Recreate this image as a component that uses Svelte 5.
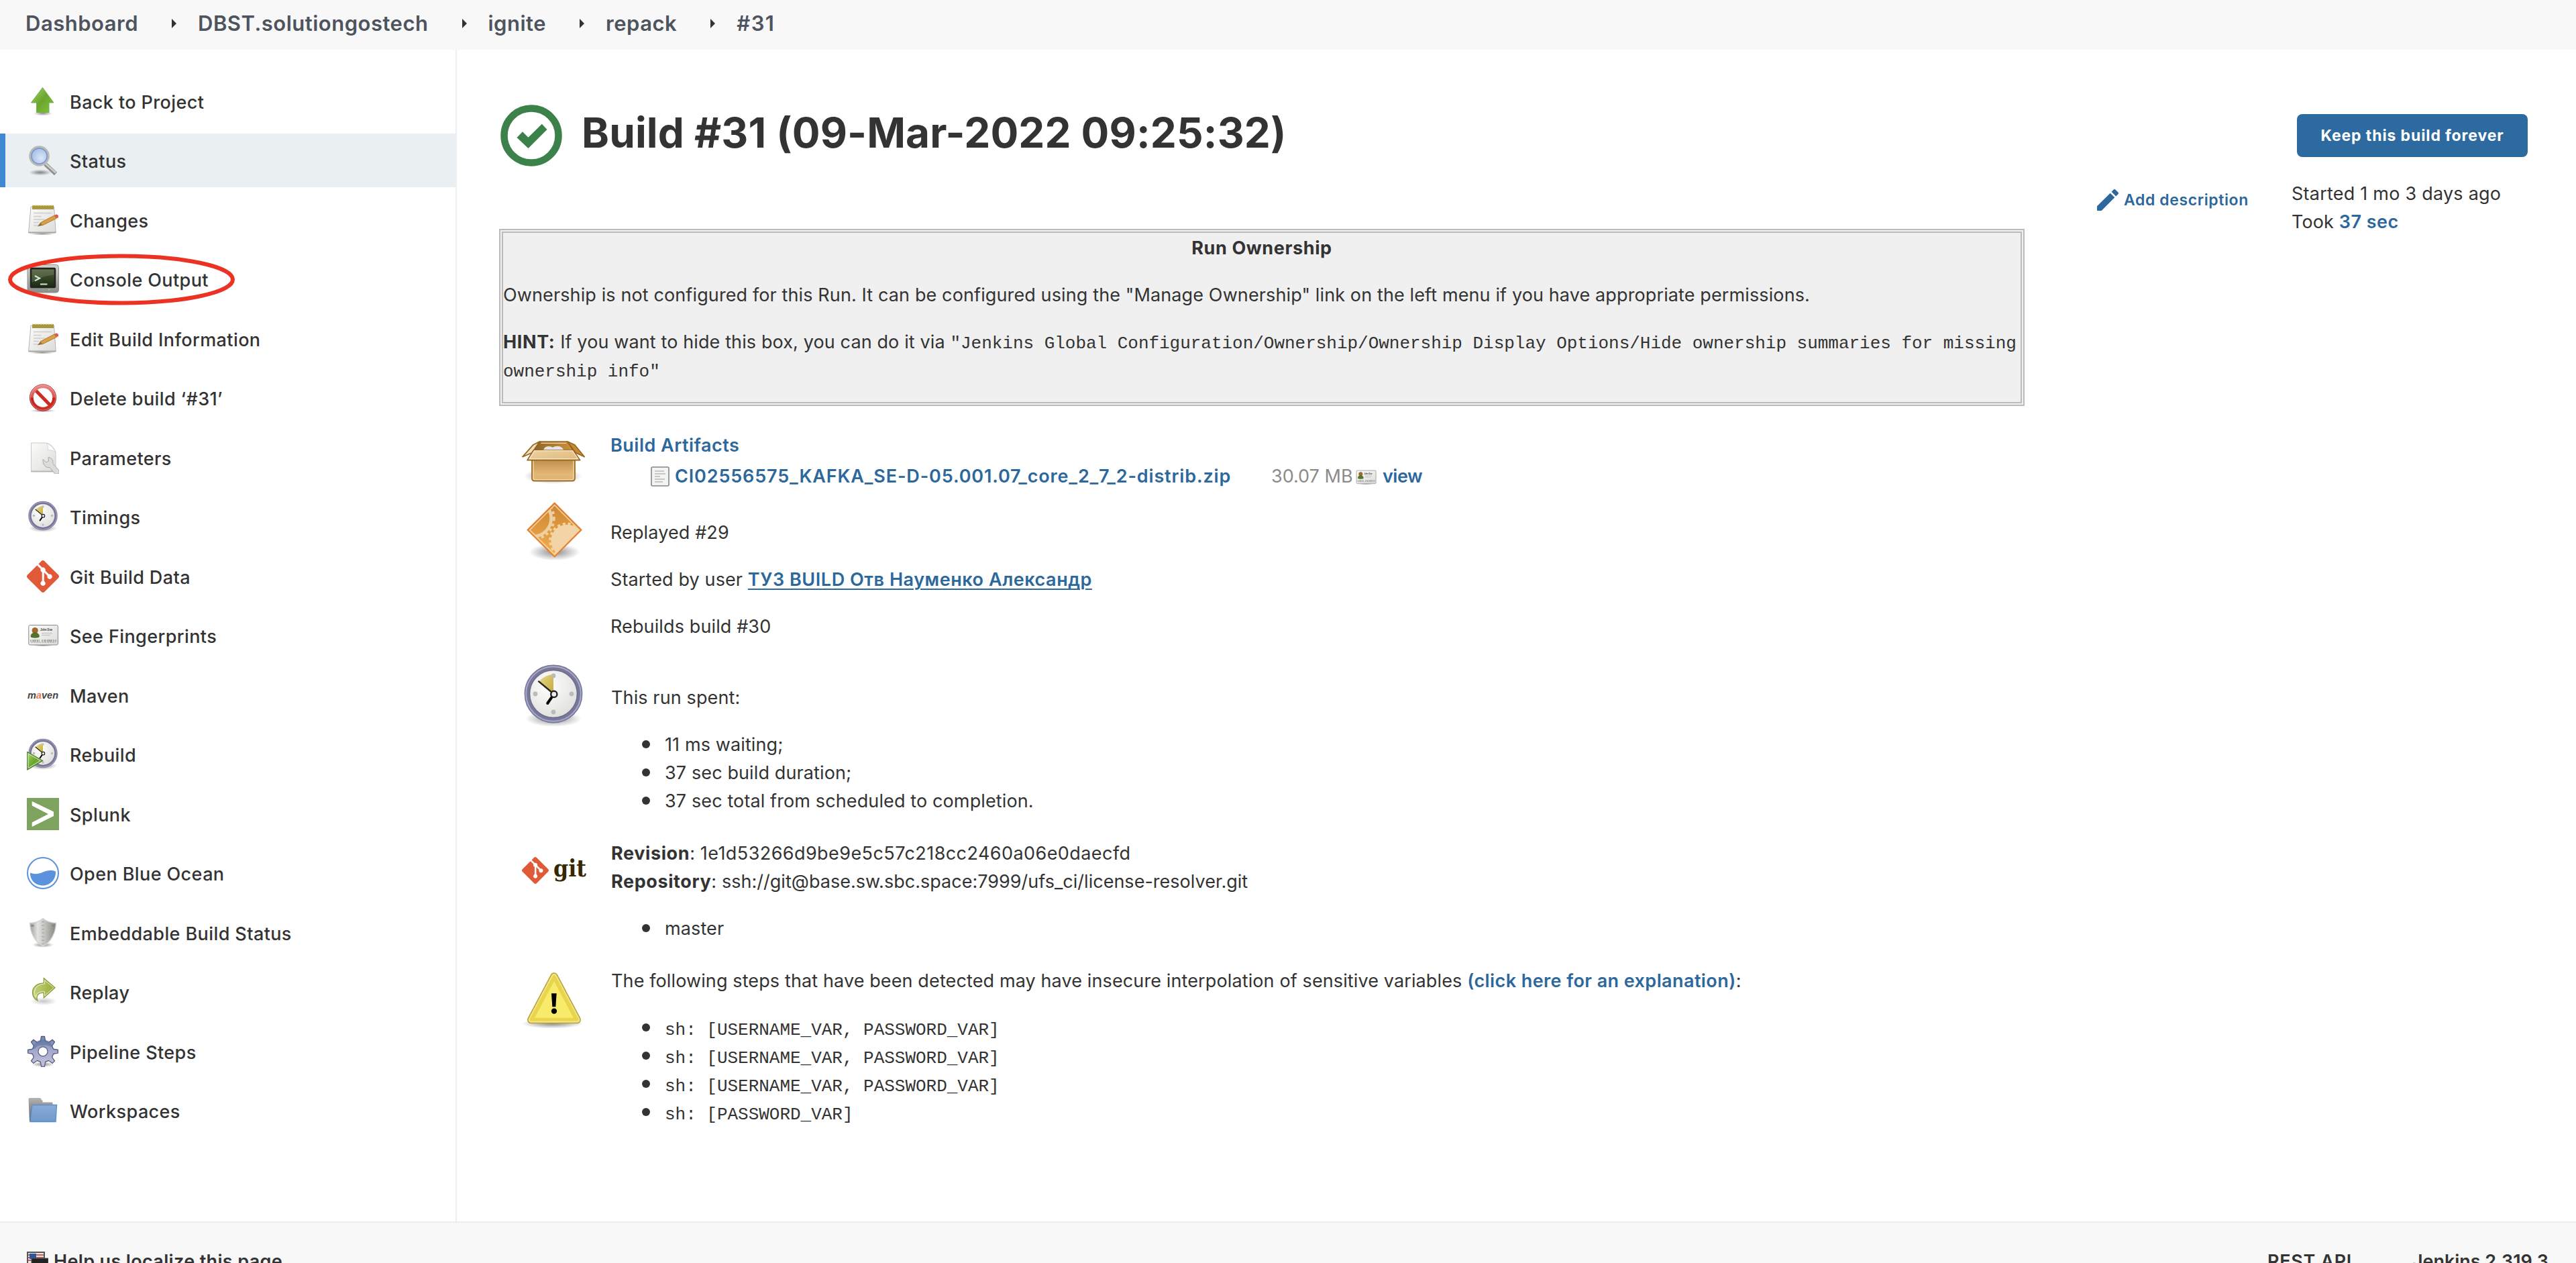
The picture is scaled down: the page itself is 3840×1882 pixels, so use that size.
<script>
  const crumbs = ['Dashboard', 'DBST.solutiongostech', 'ignite', 'repack', '#31'];

  const tasks = [
    { icon: 'up', label: 'Back to Project' },
    { icon: 'search', label: 'Status', active: true },
    { icon: 'notepad', label: 'Changes' },
    { icon: 'terminal', label: 'Console Output', marked: true },
    { icon: 'notepad', label: 'Edit Build Information' },
    { icon: 'forbidden', label: 'Delete build ‘#31’' },
    { icon: 'document', label: 'Parameters' },
    { icon: 'clock', label: 'Timings' },
    { icon: 'git', label: 'Git Build Data' },
    { icon: 'card', label: 'See Fingerprints' },
    { icon: 'maven', label: 'Maven' },
    { icon: 'rebuild', label: 'Rebuild' },
    { icon: 'splunk', label: 'Splunk' },
    { icon: 'ocean', label: 'Open Blue Ocean' },
    { icon: 'shield', label: 'Embeddable Build Status' },
    { icon: 'replay', label: 'Replay' },
    { icon: 'gear', label: 'Pipeline Steps' },
    { icon: 'folder', label: 'Workspaces' }
  ];

  const timings = ['11 ms waiting;', '37 sec build duration;', '37 sec total from scheduled to completion.'];
  const steps = [
    'sh: [USERNAME_VAR, PASSWORD_VAR]',
    'sh: [USERNAME_VAR, PASSWORD_VAR]',
    'sh: [USERNAME_VAR, PASSWORD_VAR]',
    'sh: [PASSWORD_VAR]'
  ];

  const gitMark =
    'M23.546 10.93L13.067.452c-.604-.603-1.582-.603-2.188 0L8.708 2.627l2.76 2.76c.645-.215 1.379-.07 1.889.441.516.515.658 1.258.438 1.9l2.658 2.66c.645-.223 1.387-.078 1.9.435.721.72.721 1.884 0 2.604-.719.719-1.881.719-2.6 0-.539-.541-.674-1.337-.404-1.996L12.86 8.955v6.525c.176.086.342.203.488.348.713.721.713 1.883 0 2.6-.719.721-1.889.721-2.609 0-.719-.719-.719-1.879 0-2.598.182-.18.387-.316.605-.406V8.835c-.217-.091-.424-.222-.6-.401-.545-.545-.676-1.342-.396-2.009L7.636 3.7.45 10.881c-.6.605-.6 1.584 0 2.189l10.48 10.477c.604.604 1.582.604 2.186 0l10.43-10.43c.605-.603.605-1.582 0-2.187';

  const bars = [5, 8, 10, 12, 14.5, 17, 22, 25, 27, 30, 32, 34, 36, 39, 42];

  // Cog outline: eight blunt teeth around a ring.
  function cog(cx, cy, teeth, inner, outer) {
    const pts = [];
    const step = (Math.PI * 2) / teeth;
    for (let i = 0; i < teeth; i++) {
      const a = i * step - Math.PI / 2;
      for (const [d, r] of [[-0.29, inner], [-0.14, outer], [0.14, outer], [0.29, inner]]) {
        pts.push(`${(cx + Math.cos(a + d * step) * r).toFixed(2)},${(cy + Math.sin(a + d * step) * r).toFixed(2)}`);
      }
    }
    return pts.join(' ');
  }
</script>

{#snippet clockFace()}
  <ellipse cx="24" cy="41" rx="21" ry="6" fill="url(#shadow)" />
  <circle cx="24" cy="22.5" r="19.6" fill="url(#face)" stroke="#77779b" stroke-width="4.2" />
  <circle cx="24" cy="22.5" r="20.4" fill="none" stroke="#a9a9c6" stroke-width="1" />
  <circle cx="24" cy="22.5" r="17.6" fill="none" stroke="#55556f" stroke-opacity=".5" stroke-width=".7" />
  <path d="M24 22.5V8c-4 0-8 2-11 5.500z" fill="url(#wedge)" />
  <g fill="#b9bdb6">
    <circle cx="24" cy="9" r="1.700" /><circle cx="37.500" cy="22.500" r="1.700" />
    <circle cx="24" cy="36" r="1.700" /><circle cx="10.500" cy="22.500" r="1.700" />
  </g>
  <path d="M23 21.500L13 13.200" stroke="#222" stroke-width="1.200" stroke-linecap="round" />
  <path d="M23.200 24.300L19.600 29.500" stroke="#000" stroke-width="2" stroke-linecap="round" />
  <circle cx="24.400" cy="22.700" r="2.300" fill="#eee" stroke="#222" stroke-width="1.200" />
{/snippet}

{#snippet idCard()}
  <ellipse cx="24" cy="38.500" rx="16" ry="2" fill="url(#shadow)" />
  <rect x="2.800" y="8.500" width="43.600" height="29.500" rx="2" fill="url(#paper)" stroke="#888" stroke-width="1" />
  <circle cx="12.200" cy="16.500" r="4.600" fill="#a06a2c" />
  <path d="M6 26c0-4 2-6 6.200-6s6.200 2 6.200 6c-2 1.600-10.400 1.600-12.400 0z" fill="#55762a" stroke="#36501a" stroke-width=".6" />
  <text x="20" y="17" class="card-name" textLength="18" lengthAdjust="spacingAndGlyphs">John Doe</text>
  <path d="M22 20.500h16M22 23.500h13" stroke="#c8c8c8" stroke-width="1.600" />
  {#each bars as x}
    <path d="M{x + 1} 30v3.500" stroke="#777" stroke-width="1" />
  {/each}
  <path d="M6 34.200h37" stroke="#999" stroke-width=".8" stroke-dasharray="3 1" />
{/snippet}

{#snippet icon(name)}
  <svg class="icon" viewBox="0 0 48 48" aria-hidden="true">
    {#if name === 'up'}
      <ellipse cx="24" cy="42" rx="14" ry="3.500" fill="url(#shadow)" />
      <path d="M23.500 3.500L40 26h-7v14.500H14.500V26H6.500z" fill="url(#green)" stroke="#76b04a" stroke-width="1" />
    {:else if name === 'search'}
      <ellipse cx="20" cy="42" rx="17" ry="4.500" fill="url(#shadow)" />
      <path d="M27.500 29.500L43 44" stroke="#8d8d8d" stroke-width="6" />
      <path d="M27.500 28.500L43 42.500" stroke="#cfcfcf" stroke-width="2.500" />
      <circle cx="18.500" cy="17.500" r="13.600" fill="url(#lens)" stroke="#b9b9b9" stroke-width="3.400" />
      <circle cx="18.500" cy="17.500" r="11.500" fill="none" stroke="#6f92c9" stroke-width="1.400" />
    {:else if name === 'notepad'}
      <ellipse cx="23" cy="44.500" rx="19" ry="2" fill="url(#shadow)" />
      <path d="M6 4h34.500l2.700 38.500H2.600z" fill="url(#paper)" stroke="#b5b5b0" stroke-width="1" />
      <path d="M2.600 42.500h40.600" stroke="#a5a5a0" stroke-width="2" />
      <rect x="8" y="2" width="32" height="6" fill="#a8983f" />
      <path d="M8 2h32" stroke="#e9dfa0" stroke-width="1.600" stroke-dasharray="2 2" />
      <path d="M10 13.500h27M10 18.500h12M10 23h17M10 27.500h8M10 32h10" stroke="#cdcdcd" stroke-width="1.400" />
      <path d="M20 28L41 17l3 4.500L23 32z" fill="#dba044" stroke="#9a6a22" stroke-width=".8" />
      <path d="M20 28l-4 5.500L23 32z" fill="#8d713c" />
      <path d="M41 17l2.600-1.400c2.400-.6 4.600 2.600 3 4.600L44 21.500z" fill="#dd5a4e" />
    {:else if name === 'terminal'}
      <rect x="1" y="2.500" width="46.500" height="41.500" rx="4" fill="url(#bezel)" stroke="#8f918c" stroke-width="1" />
      <rect x="6" y="8" width="36" height="28" rx="1" fill="url(#screen)" stroke="#20241d" stroke-width="2.400" />
      <path d="M7.500 9.500h33v8c-12 1-22 4-33 12z" fill="#fff" fill-opacity=".13" />
      <path d="M12 19l7 3.700-7 3.700" fill="none" stroke="#d4ead0" stroke-width="2.200" />
      <path d="M20 31.500h10.500" stroke="#c5dcc0" stroke-width="2.200" />
      <circle cx="33" cy="39.800" r="1" fill="#9be04f" />
    {:else if name === 'forbidden'}
      <ellipse cx="24" cy="43" rx="19" ry="2.500" fill="url(#shadow)" />
      <path d="M11.500 11l24.500 25" stroke="#cc2a24" stroke-width="5" />
      <circle cx="24" cy="23.500" r="17" fill="none" stroke="url(#red)" stroke-width="5.600" />
      <circle cx="24" cy="23.500" r="18.600" fill="none" stroke="#fff" stroke-opacity=".35" stroke-width="1" />
      <circle cx="24" cy="23.500" r="19.700" fill="none" stroke="#a8201c" stroke-width=".7" />
    {:else if name === 'document'}
      <path d="M6.500 2h22c7 1 12 7 14.500 14v28.500H6.500z" fill="url(#paper)" stroke="#c9cac6" stroke-width="1" />
      <path d="M6.500 44.500H43" stroke="#b5b6b2" stroke-width="1.800" />
      <path d="M29 2.500c2.500 3 3.500 7 2.500 10.500 4-1 8 .3 10.500 2.500-2-6-7-11-13-13z" fill="#fff" stroke="#d2d2d0" stroke-width=".8" />
      <path d="M24 26.500l5 4.500 3.500-2-.5-5.500c5 .3 8 4.500 6.500 9L48 43v5H42l-8-9.500c-6 1-10.500-4-10-12z" fill="#dcddda" stroke="#a9aaa7" stroke-width="1" />
    {:else if name === 'clock'}
      {@render clockFace()}
    {:else if name === 'git'}
      <path transform="scale(2)" d={gitMark} fill="#e05a38" />
    {:else if name === 'card'}
      {@render idCard()}
    {:else if name === 'maven'}
      <text x="1" y="29" class="maven" textLength="46" lengthAdjust="spacingAndGlyphs">m<tspan fill="#ee7a52">a</tspan>ven</text>
    {:else if name === 'rebuild'}
      {@render clockFace()}
      <path d="M.8 20.500L23.500 33.500.8 47z" fill="url(#green)" stroke="#4c7a32" stroke-width="1.200" />
      <path d="M2.200 23L20.500 33.500 2.200 44.500z" fill="none" stroke="#dff3cd" stroke-width=".9" />
    {:else if name === 'splunk'}
      <path d="M0 0h48v48H0z" fill="#7ea35e" />
      <path d="M7.700 5L40 20.500V27L7.700 43V36.500L32 23.900 7.700 11.500z" fill="#fff" />
    {:else if name === 'ocean'}
      <circle cx="24" cy="24" r="23" fill="#fff" stroke="#5a92de" stroke-width="2" />
      <path d="M5 23.500c6 2.500 12 2 18-.5 7-3 13-4 20-1.500.8 11-7.500 21-19 21S4.500 34 5 23.500z" fill="#5a92de" />
    {:else if name === 'shield'}
      <ellipse cx="24" cy="42" rx="16" ry="4" fill="url(#shadow)" />
      <path d="M24 2.500c5 4.500 12 6.500 19.500 7C43 24 36 38 24 43.500 12 38 5 24 4.500 9.500 12 9 19 7 24 2.500z" fill="url(#steel)" stroke="#d4d5d1" stroke-width="1.400" />
      <path d="M24 7v34" stroke="#a3a49f" stroke-width="3.400" stroke-dasharray="1.300 4.200" />
      <path d="M6.500 13.500h4M37.500 13.500h4" stroke="#858680" stroke-width="2.500" />
    {:else if name === 'replay'}
      <ellipse cx="25" cy="38" rx="20" ry="6" fill="url(#shadow)" opacity=".5" />
      <path d="M25.300 3.500L42 17.700 25.300 33V25.500c-7-1-12 3-9.500 11.500C9 33 7 26 9.500 19.500 12 14 18 11 25.300 10.800z" fill="url(#lime)" stroke="#89983c" stroke-width="1.200" />
      <path d="M26.600 6.500L40 17.700 26.600 30v-6c-8-1-13 2-12.800 8C9 25 11 13 26.600 12z" fill="none" stroke="#f4f8dc" stroke-width=".9" />
    {:else if name === 'gear'}
      <ellipse cx="24" cy="43" rx="17" ry="4" fill="url(#shadow)" />
      <polygon points={cog(24, 23.800, 8, 16, 22.500)} fill="url(#cog)" stroke="#4b5479" stroke-width="1.200" stroke-linejoin="round" />
      <path d="M9 20c5 1 5-6 10-5 6 0 12-2 19 3 0-8-7-12-14-12S9 11 9 20z" fill="#5b6e9c" fill-opacity=".55" />
      <circle cx="24" cy="23.800" r="7" fill="#fff" stroke="#59618a" stroke-width="1.200" />
    {:else if name === 'folder'}
      <path d="M2.500 7c0-1.500 1-2 2-2h14.500c2 0 2.500 1 3 3.500h1.500v3H37c1 0 1.500.5 1.500 1.500v27H4z" fill="url(#tab)" />
      <path d="M8 15.500h36.500L43 40.500H5z" fill="url(#blue)" stroke="#5f8fc8" stroke-width="1.400" />
    {/if}
  </svg>
{/snippet}

<svg class="defs" aria-hidden="true">
  <defs>
    <radialGradient id="shadow"><stop offset="0" stop-color="#000" stop-opacity=".45" /><stop offset="1" stop-color="#000" stop-opacity="0" /></radialGradient>
    <linearGradient id="green" x1="0" y1="0" x2="1" y2="1"><stop offset="0" stop-color="#a8d66c" /><stop offset=".5" stop-color="#6aa52e" /><stop offset="1" stop-color="#80c83c" /></linearGradient>
    <radialGradient id="lens" cx=".6" cy=".6"><stop offset="0" stop-color="#dce8f7" /><stop offset="1" stop-color="#a9c2e8" /></radialGradient>
    <linearGradient id="paper" x1="0" y1="0" x2="1" y2="1"><stop offset="0" stop-color="#fbfbfa" /><stop offset="1" stop-color="#dcdddb" /></linearGradient>
    <linearGradient id="bezel" x1="0" y1="0" x2="0" y2="1"><stop offset="0" stop-color="#d4d5d1" /><stop offset="1" stop-color="#8b8d88" /></linearGradient>
    <linearGradient id="screen" x1="0" y1="0" x2="0" y2="1"><stop offset="0" stop-color="#4d6034" /><stop offset="1" stop-color="#1c2914" /></linearGradient>
    <linearGradient id="red" x1="0" y1="0" x2="0" y2="1"><stop offset="0" stop-color="#e58682" /><stop offset=".48" stop-color="#d9534e" /><stop offset=".52" stop-color="#c4211b" /><stop offset="1" stop-color="#cf2e28" /></linearGradient>
    <radialGradient id="face" cx=".4" cy=".35" r=".7"><stop offset="0" stop-color="#fff" /><stop offset="1" stop-color="#dcdcd9" /></radialGradient>
    <linearGradient id="wedge" x1="0" y1="0" x2="1" y2="1"><stop offset="0" stop-color="#e8d98a" /><stop offset="1" stop-color="#c2a93a" /></linearGradient>
    <linearGradient id="steel"><stop offset="0" stop-color="#9c9d98" /><stop offset=".3" stop-color="#e3e4e0" /><stop offset=".6" stop-color="#bfc0bb" /><stop offset="1" stop-color="#84857f" /></linearGradient>
    <linearGradient id="lime"><stop offset="0" stop-color="#c3d37e" /><stop offset="1" stop-color="#96ae34" /></linearGradient>
    <linearGradient id="cog" x1="0" y1="0" x2="0" y2="1"><stop offset="0" stop-color="#7385b0" /><stop offset=".5" stop-color="#a5aace" /><stop offset="1" stop-color="#cbc0dd" /></linearGradient>
    <linearGradient id="tab" x1="0" y1="0" x2="0" y2="1"><stop offset="0" stop-color="#b3b3b1" /><stop offset="1" stop-color="#5c5d5b" /></linearGradient>
    <linearGradient id="blue" x1="0" y1="0" x2="0" y2="1"><stop offset="0" stop-color="#88acd8" /><stop offset="1" stop-color="#7099cb" /></linearGradient>
    <linearGradient id="carton" x1="0" y1="0" x2="0" y2="1"><stop offset="0" stop-color="#b98a44" /><stop offset=".7" stop-color="#e3b878" /><stop offset="1" stop-color="#deb06c" /></linearGradient>
    <linearGradient id="flap" x1="0" y1="0" x2="1" y2="1"><stop offset="0" stop-color="#ecd2a4" /><stop offset="1" stop-color="#e0b878" /></linearGradient>
    <linearGradient id="inside"><stop offset="0" stop-color="#8f6428" /><stop offset="1" stop-color="#cf923c" /></linearGradient>
    <linearGradient id="amber" x1="0" y1="0" x2="0" y2="1"><stop offset="0" stop-color="#cd8432" /><stop offset="1" stop-color="#f2b04e" /></linearGradient>
    <clipPath id="diamond"><path d="M200 340L308 449 200 557 91 449z" /></clipPath>
  </defs>
</svg>

<div class="page">
  <nav class="topbar">
    {#each crumbs as crumb, i}
      {#if i > 0}
        <svg class="arrow" viewBox="0 0 7 14" aria-hidden="true"><path d="M0 0l7 7-7 7z" fill="#333" /></svg>
      {/if}
      <span class="crumb" class:last={i === crumbs.length - 1}>{crumb}</span>
    {/each}
  </nav>

  <div class="columns">
    <aside class="sidebar">
      {#each tasks as task}
        <div class="task" class:active={task.active}>
          {@render icon(task.icon)}
          <span class="task-label">{task.label}</span>
          {#if task.marked}
            <svg class="marker" viewBox="0 0 340 78" aria-hidden="true">
              <ellipse cx="170" cy="38.500" rx="166" ry="35" fill="none" stroke="#ec3323" stroke-width="6" />
            </svg>
          {/if}
        </div>
      {/each}
    </aside>

    <main class="content">
      <section class="build">
        <header class="title">
          <svg class="status" viewBox="0 0 92 92" aria-hidden="true">
            <circle cx="46" cy="46" r="40.500" fill="none" stroke="#3c804a" stroke-width="10.500" />
            <path d="M24.500 49l8.500-8.800 8.500 8.500 20.300-20 7.700 8.300-28 28z" fill="#3c804a" />
          </svg>
          <h1>Build #31 (09-Mar-2022 09:25:32)</h1>
        </header>

        <div class="ownership">
          <p class="center"><b>Run Ownership</b></p>
          <p>Ownership is not configured for this Run. It can be configured using the "Manage Ownership" link on the left menu if you have appropriate permissions.</p>
          <p><b>HINT:</b> If you want to hide this box, you can do it via <code>"Jenkins Global Configuration/Ownership/Ownership Display Options/Hide ownership summaries for missing ownership info"</code></p>
        </div>

        <div class="entry artifacts">
          <svg class="art" viewBox="45 6 300 258" aria-hidden="true">
            <ellipse cx="193" cy="208" rx="130" ry="36" fill="url(#shadow)" />
            <rect x="99" y="128" width="192" height="102" rx="10" fill="url(#carton)" stroke="#97661f" stroke-width="5" />
            <path d="M105 140v76q0 8 8 8h164q8 0 8-8v-76" fill="none" stroke="#f2d8a8" stroke-width="4" />
            <path d="M133 54h125l26 42H106z" fill="url(#inside)" stroke="#97661f" stroke-width="5" />
            <path d="M150 93q4-18 24-18 12 0 17 5 8-6 22-6 22 1 28 19z" fill="#e4e4e2" />
            <path d="M133 54l-28 14-48 54 42-18z" fill="#f0dfc0" stroke="#97661f" stroke-width="5" stroke-linejoin="round" />
            <path d="M258 54l32 14 44 54-40-18z" fill="#c48a38" stroke="#97661f" stroke-width="5" stroke-linejoin="round" />
            <path d="M106 93h177l31 44H78z" fill="url(#flap)" stroke="#97661f" stroke-width="5" stroke-linejoin="round" />
            <path d="M110 95h170l24 36H88z" fill="none" stroke="#f7e6c6" stroke-width="4" />
            <path d="M139 61h113" stroke="#f2d8a8" stroke-width="4" />
          </svg>
          <div class="body">
            <div class="link">Build Artifacts</div>
            <div class="file">
              <svg class="file-icon" viewBox="0 0 28 30" aria-hidden="true">
                <rect x="1" y="1" width="26" height="28" rx="1.500" fill="#f4f4f3" stroke="#858585" stroke-width="1.600" />
                <path d="M6 7h14M6 11h16M6 15h8M6 19h15M6 23h12" stroke="#b9b9b9" stroke-width="1.600" />
              </svg>
              <span class="link zip">CI02556575_KAFKA_SE-D-05.001.07_core_2_7_2-distrib.zip</span>
              <span class="size">30.07 MB</span>
              <svg class="card-icon" viewBox="2 7 45 33" aria-hidden="true">{@render idCard()}</svg>
              <span class="link view">view</span>
            </div>
          </div>
        </div>

        <div class="entry cause">
          <svg class="art" viewBox="45 312 300 290" aria-hidden="true">
            <ellipse cx="200" cy="548" rx="114" ry="38" fill="url(#shadow)" />
            <path d="M200 328L320 449 200 569 79 449z" fill="url(#amber)" stroke="#e57c2e" stroke-width="5" stroke-linejoin="round" />
            <g clip-path="url(#diamond)">
              <circle cx="104" cy="397" r="81" fill="none" stroke="#eecfa2" stroke-width="14" />
              <circle cx="104" cy="397" r="93" fill="none" stroke="#eecfa2" stroke-width="12" stroke-dasharray="12 12" />
              <circle cx="256" cy="497" r="72" fill="#f3d4a6" />
              <circle cx="256" cy="497" r="76" fill="none" stroke="#f3d4a6" stroke-width="11" stroke-dasharray="12 12" />
            </g>
            <path d="M200 338L310 449 200 559 89 449z" fill="none" stroke="#f6ddb4" stroke-opacity=".8" stroke-width="5" />
          </svg>
          <div class="body">
            <p>Replayed #29</p>
            <p>Started by user <span class="link user">ТУЗ BUILD Отв Науменко Александр</span></p>
            <p>Rebuilds build #30</p>
          </div>
        </div>

        <div class="entry spent">
          <svg class="art" viewBox="0 0 48 48" aria-hidden="true">{@render clockFace()}</svg>
          <div class="body">
            <p>This run spent:</p>
            <ul>{#each timings as t}<li>{t}</li>{/each}</ul>
          </div>
        </div>

        <div class="entry revision">
          <svg class="art" viewBox="0 0 97 42" aria-hidden="true">
            <path transform="translate(0 1) scale(1.667)" d={gitMark} fill="#e05a38" />
            <text x="47" y="30" class="git-word" textLength="49" lengthAdjust="spacingAndGlyphs">git</text>
          </svg>
          <div class="body">
            <div><b>Revision</b>: <span class="hash">1e1d53266d9be9e5c57c218cc2460a06e0daecfd</span></div>
            <div><b>Repository</b>: <span class="repo">ssh://git@base.sw.sbc.space:7999/ufs_ci/license-resolver.git</span></div>
            <ul><li>master</li></ul>
          </div>
        </div>

        <div class="entry warning">
          <svg class="art" viewBox="36 545 288 258" aria-hidden="true">
            <ellipse cx="175" cy="780" rx="138" ry="22" fill="url(#shadow)" />
            <path d="M183 569L286 763H80z" fill="#e9d54c" stroke="#b8a034" stroke-width="34" stroke-linejoin="round" />
            <path d="M183 569L286 763H80z" fill="#e9d54c" stroke="#f2e58a" stroke-width="25" stroke-linejoin="round" />
            <path d="M183 571L284 761H82z" fill="#e9d54c" stroke="#e9d54c" stroke-width="15" stroke-linejoin="round" />
            <path d="M183 591L270 754H96z" fill="#f8ea6a" />
            <path d="M171 645h23l-4 60h-15z" />
            <circle cx="183" cy="724" r="12.500" />
          </svg>
          <div class="body">
            <div>The following steps that have been detected may have insecure interpolation of sensitive variables <span class="link explain">(click here for an explanation)</span>:</div>
            <ul>{#each steps as s}<li><code>{s}</code></li>{/each}</ul>
          </div>
        </div>
      </section>

      <div class="describe">
        <svg class="pencil" viewBox="3 3 18 18" aria-hidden="true">
          <path d="M3 17.250V20.400a.6.6 0 0 0 .6.6h3.150L17.810 9.940l-3.750-3.750zM20.710 7.040a1 1 0 0 0 0-1.410l-2.340-2.340a1 1 0 0 0-1.410 0l-1.830 1.830 3.750 3.750z" fill="#2c689c" />
        </svg>
        <span>Add description</span>
      </div>

      <div class="meta">
        <button>Keep this build forever</button>
        <div class="started">Started 1 mo 3 days ago</div>
        <div>Took <span class="link">37 sec</span></div>
      </div>
    </main>
  </div>

  <footer class="footer">
    <svg class="flag" viewBox="0 0 32 32" aria-hidden="true">
      <rect x="1" y="1" width="25" height="20" fill="#e8e6e4" stroke="#555753" stroke-width="2" />
      <path d="M2 5h23M2 9h23M2 13h23" stroke="#c9605c" stroke-width="1.800" />
      <rect x="4" y="3" width="10" height="8" fill="#2f55a0" />
      <rect x="7" y="10" width="25" height="20" fill="#222" stroke="#555" stroke-width="1" />
    </svg>
    <span class="localize">Help us localize this page</span>
    <span class="rest">REST API</span>
    <span class="version">Jenkins 2.319.3</span>
  </footer>
</div>

<style>
  :global(body) { background: #fff; }
  .page {
    display: flex;
    flex-direction: column;
    width: 3840px;
    height: 1882px;
    overflow: hidden;
    font: 400 27px/42px Inter, 'Noto Sans', sans-serif;
    letter-spacing: 0.118px;
    color: #333;
  }
  .defs { position: absolute; width: 0; height: 0; }
  p, ul, h1 { margin: 0; padding: 0; }

  .topbar {
    display: flex;
    align-items: center;
    flex: none;
    height: 74px;
    padding: 0 38px;
    box-sizing: border-box;
    background: #f8f8f8;
    color: #4d545d;
    font-size: 31px;
    font-weight: 600;
    letter-spacing: 0.500px;
    white-space: nowrap;
  }
  .crumb { line-height: 42px; margin-bottom: 4px; }
  .crumb.last { letter-spacing: 1.500px; }
  .arrow { width: 7px; height: 14px; margin: 0 32px 5px 50px; }

  .columns { display: flex; flex: none; height: 1746px; }
  .sidebar {
    width: 679px;
    flex: none;
    padding-top: 36.500px;
    border-right: 2px solid #eaeff2;
    height: 1709.500px;
    font-weight: 500;
    letter-spacing: 0.400px;
  }
  .task {
    position: relative;
    display: flex;
    align-items: center;
    height: 80px;
    margin-bottom: 8.500px;
    padding-left: 32px;
    border-left: 8px solid transparent;
  }
  .task.active { background: #eaeff2; border-left-color: #3f87d2; }
  .task-label { padding-top: 4px; }
  .icon { width: 48px; height: 48px; margin-right: 16px; flex: none; }
  .marker { position: absolute; left: 3px; top: 2px; width: 340px; height: 78px; }
  .maven { font: italic 700 14px 'Liberation Sans', sans-serif; fill: #444; letter-spacing: 0; }
  .card-name { font: 700 4.500px 'Liberation Sans', sans-serif; fill: #333; letter-spacing: 0; }
  .git-word { font: 700 36px 'DejaVu Serif', serif; fill: #362701; letter-spacing: 0; }

  .content { display: flex; flex: 1; padding-left: 63px; }
  .build { width: 2274px; flex: none; }
  .title { display: flex; height: 185px; margin-top: 82px; }
  .status { width: 92px; height: 92px; margin: 0 29px 0 2px; }
  h1 { font-size: 62px; font-weight: 700; line-height: 80px; margin-top: 2px; letter-spacing: 0.150px; white-space: nowrap; }

  .ownership {
    height: 264px;
    box-sizing: border-box;
    border: 6px double #bbb;
    padding-top: 2px;
    background: #f0f0f0;
  }
  .ownership p { margin-bottom: 28px; }
  .center { text-align: center; }
  b { font-weight: 700; letter-spacing: 0.600px; }
  code { font: 26px/1 'Liberation Mono', monospace; letter-spacing: -0.020px; }

  .link { color: #2c689c; font-weight: 600; letter-spacing: 0.500px; }
  .entry { display: flex; }
  .art { display: block; flex: none; }
  .body { width: 2100px; margin-top: 1px; white-space: nowrap; }
  ul { list-style: none; margin-top: 28px; }
  li { display: flex; align-items: center; height: 42px; padding-left: 46px; }
  li::before { content: ''; width: 12px; height: 12px; margin: 0 22px 2px 0; border-radius: 50%; background: #333; }
  li code { padding-top: 6px; }

  .artifacts { height: 102px; margin-top: 37px; }
  .artifacts .art { width: 100px; height: 86px; margin: 0 35px 0 31px; }
  .file { display: flex; align-items: center; height: 42px; margin: 4px 0 0 60px; }
  .file-icon { width: 28px; height: 30px; margin-right: 8px; }
  .zip { width: 889px; letter-spacing: 0.850px; }
  .size { width: 126px; color: #8b8b8b; letter-spacing: 0; }
  .card-icon { width: 31px; height: 22px; margin-top: 2px; }
  .view { margin-left: 9px; letter-spacing: -0.500px; }

  .cause { height: 238px; }
  .cause .art { width: 100px; height: 96.670px; margin: 0 35px 0 31px; }
  .cause .body { padding-top: 28px; }
  .cause p { margin-bottom: 28px; }
  .user { letter-spacing: 0.550px; text-decoration: underline; text-decoration-thickness: 2px; text-underline-offset: 4px; }

  .spent { height: 268px; }
  .spent .art { width: 96px; height: 96px; margin: 7px 38px 0 33px; }
  .spent .body { padding-top: 36px; }

  .revision { height: 190px; }
  .revision .art { width: 97px; height: 42px; margin: 26px 36px 0 34px; }
  .hash { letter-spacing: 0.430px; }
  .repo { letter-spacing: 0.020px; }

  .warning .art { width: 96px; height: 86px; margin: 7px 38px 0 33px; }
  .explain { letter-spacing: 0.420px; }

  .describe {
    display: flex;
    align-items: center;
    align-self: flex-start;
    width: 289px;
    margin: 202px 0 0 108px;
    color: #2c689c;
    font-size: 23px;
    font-weight: 600;
    letter-spacing: 0.600px;
    white-space: nowrap;
  }
  .describe span { padding-top: 1px; }
  .pencil { width: 32px; height: 32px; margin-right: 8px; }
  .meta { padding: 96px 0 0 1px; white-space: nowrap; }
  .meta button {
    display: block;
    width: 344px;
    height: 64px;
    margin: 0 0 34px 8px;
    padding: 0;
    border: 0;
    border-radius: 8px;
    background: #2d6a9f;
    color: #fff;
    font: 700 23px/64px Inter, sans-serif;
    letter-spacing: 0.880px;
  }
  .started { letter-spacing: 0.230px; }

  .footer {
    display: flex;
    flex: none;
    height: 62px;
    box-sizing: border-box;
    padding: 37px 41px 0 40px;
    border-top: 2px solid #eaeff2;
    background: #f8f8f8;
    font-weight: 600;
    letter-spacing: 0.350px;
    white-space: nowrap;
    overflow: hidden;
  }
  .flag { width: 32px; height: 32px; margin: 6px 8px 0 0; flex: none; }
  .localize { flex: 1; }
  .rest { margin-right: 90px; letter-spacing: 0.680px; }
  .version { letter-spacing: -0.050px; }
</style>
